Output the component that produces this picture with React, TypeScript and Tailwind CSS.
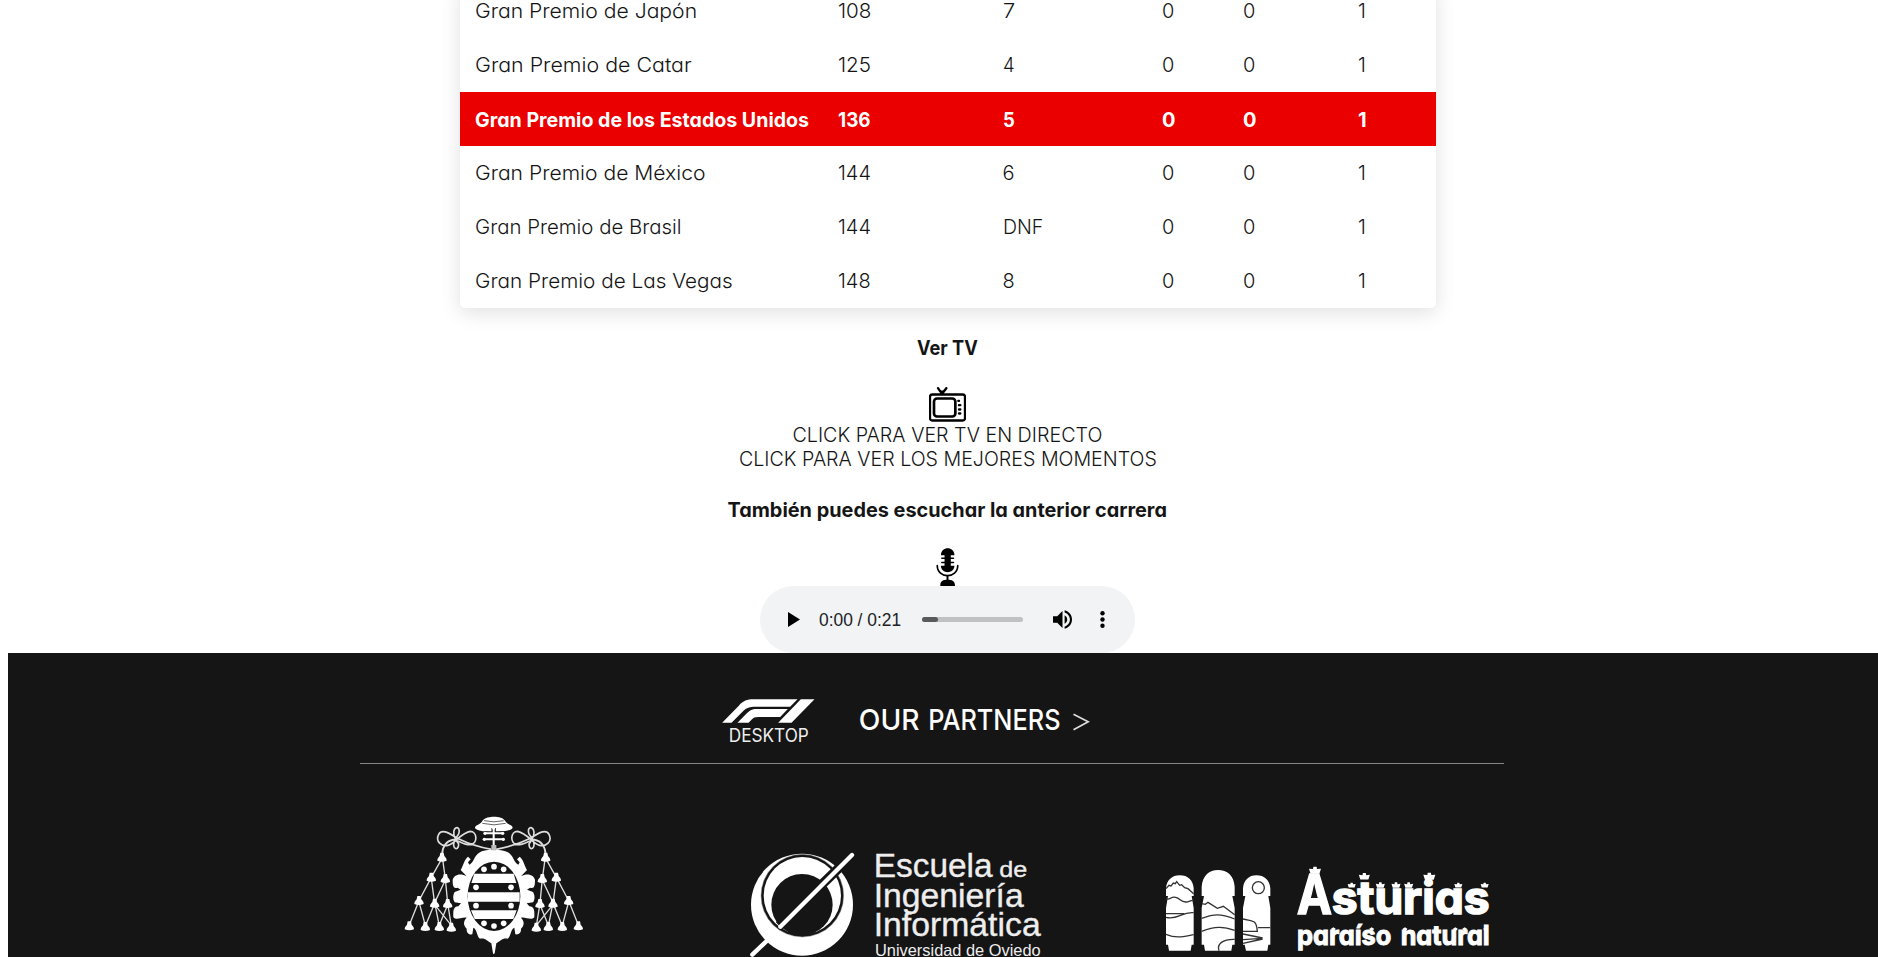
import { useLayoutEffect, useRef, useState } from "react";

type FitProps = { text: string; width: number; className?: string };

// Widens or narrows a line of text so that it spans the given measure.
function Fit({ text, width, className = "origin-left" }: FitProps) {
  const ref = useRef<HTMLSpanElement>(null);
  const [scale, setScale] = useState(1);
  useLayoutEffect(() => {
    if (ref.current) setScale(width / ref.current.offsetWidth);
  }, [text, width]);
  return (
    <span ref={ref} className={`inline-block whitespace-nowrap ${className}`} style={{ transform: `scaleX(${scale})` }}>
      {text}
    </span>
  );
}

const rows = [
  { race: "Gran Premio de Japón", w: 222, points: "108", pos: "7" },
  { race: "Gran Premio de Catar", w: 217, points: "125", pos: "4" },
  { race: "Gran Premio de los Estados Unidos", w: 334, points: "136", pos: "5", active: true },
  { race: "Gran Premio de México", w: 231, points: "144", pos: "6" },
  { race: "Gran Premio de Brasil", w: 207, points: "144", pos: "DNF" },
  { race: "Gran Premio de Las Vegas", w: 258, points: "148", pos: "8" },
];

function Standings() {
  return (
    <div className="ml-[460px] -mt-4 w-[976px] rounded-[5px] bg-white shadow-[0_5px_20px_rgba(0,0,0,0.12)]">
      {rows.map((r) => (
        <div
          key={r.race}
          className={`grid h-[54px] grid-cols-[364px_164px_160px_80px_115px_auto] items-center pl-[14px] leading-6 ${
            r.active ? "bg-[#eb0000] pt-0.5 font-bold text-white" : "font-light"
          }`}
        >
          <span className="pl-[0.5px]"><Fit text={r.race} width={r.w} /></span>
          <span><Fit text={r.points} width={33} /></span>
          <span className="pl-[0.5px]"><Fit text={r.pos} width={r.pos === "DNF" ? 40 : 12} /></span>
          <span>0</span>
          <span className="pl-px">0</span>
          <span className="pl-px">1</span>
        </div>
      ))}
    </div>
  );
}

function TvIcon() {
  return (
    <svg viewBox="0 0 111 104" className="block h-[35px] w-[37px]" fill="none" stroke="#000">
      <rect x="3" y="22" width="105" height="78" rx="7" strokeWidth="7" />
      <rect x="15" y="34" width="64" height="54" rx="9" strokeWidth="8" />
      <path d="M27 3l12 17L52 3" strokeWidth="7" strokeLinecap="round" />
      <path d="M31 10L47 10L43 21H36Z" fill="#000" stroke="none" />
      <path d="M88 41h2M90 54h4M90 67h4M90 79h4" strokeWidth="7" strokeLinecap="round" />
    </svg>
  );
}

function MicIcon() {
  return (
    <svg viewBox="0 0 68 115" className="block h-[38px] w-[23px]">
      <path d="M14 22C14-6 55-6 55 22Z" />
      <path d="M14 54H55C54 80 15 80 14 54Z" />
      <path d="M25 18H44V60H25Z" />
      <path d="M17 31H52M17 44H52" stroke="#000" strokeWidth="5" strokeLinecap="round" />
      <path d="M3 53C3 94 65 94 65 53" fill="none" stroke="#000" strokeWidth="5" strokeLinecap="round" />
      <path d="M31 83H37V98H31Z" />
      <path d="M12 115C12 99 20 96 34 96C48 96 56 99 57 115Z" />
    </svg>
  );
}

function Player() {
  return (
    <div className="flex h-[67px] w-[375px] shrink-0 items-center rounded-full bg-[#f1f3f4] font-['Liberation_Sans',sans-serif]">
      <svg viewBox="0 0 12 15" className="ml-7 h-[15px] w-3"><path d="M0 0L12 7.5L0 15Z" /></svg>
      <span className="ml-[19px] w-[83px] text-[#202124]"><Fit text="0:00 / 0:21" width={82} className="origin-left text-[18px] leading-6" /></span>
      <div className="ml-5 h-[5px] w-[101px] overflow-hidden rounded-full bg-[#c0c1c2]">
        <div className="h-full w-4 rounded-r-full bg-[#5a5a5b]" />
      </div>
      <svg viewBox="3 3 18 18" className="ml-[30px] h-[19px] w-[19px]">
        <path d="M3 9v6h4l5 5V4L7 9H3zm13.5 3A4.5 4.5 0 0 0 14 7.97v8.05c1.48-.73 2.5-2.25 2.5-4.02zM14 3.23v2.06c2.89.86 5 3.54 5 6.71s-2.11 5.85-5 6.71v2.06c4.01-.91 7-4.49 7-8.77s-2.99-7.86-7-8.77z" />
      </svg>
      <svg viewBox="0 0 5 17" className="ml-7 h-[17px] w-[5px]">
        <circle cx="2.5" cy="2.2" r="2.2" /><circle cx="2.5" cy="8.5" r="2.2" /><circle cx="2.5" cy="14.8" r="2.2" />
      </svg>
    </div>
  );
}

function F1Logo() {
  return (
    <svg viewBox="60 80 290 165" className="h-[55px] w-[97px]" fill="#fff">
      <path d="M66 157L116 106C130 91 140 87 160 87H292L270 109H166C148 109 140 112 130 121L94 157Z" />
      <path d="M112 157L137 132C148 121 154 116 170 116H263L240 140H174C164 140 160 142 154 148L145 157Z" />
      <path d="M302 87H343L274 157H234Z" />
      <text x="86" y="216" fontSize="55" fontWeight="400" fill="#eee" textLength="240" lengthAdjust="spacingAndGlyphs">DESKTOP</text>
    </svg>
  );
}

const tassels = [
  [156, 172], [124, 232], [166, 236], [87, 302], [134, 310], [173, 311],
  [58, 378], [106, 380], [148, 380], [184, 382],
];

function CrestSide() {
  return (
    <g>
      <path
        d="M305 148C270 142 230 128 205 116C180 102 156 84 146 103C135 125 155 140 174 136C195 132 210 100 240 94C262 94 264 130 242 134C222 136 205 120 190 119C165 124 157 140 156 165M196 117C178 78 216 72 206 102L196 117C180 144 206 158 206 132L196 117"
        fill="none" stroke="#ddd" strokeWidth="5"
      />
      <path
        d="M156 175L124 232L87 302L58 375M158 178L166 236L173 310L184 378M124 236L134 310L106 378M166 240L134 308L148 378M87 306L106 376M134 314L184 376M173 314L148 376"
        fill="none" stroke="#ddd" strokeWidth="4"
      />
      {tassels.map(([x, y]) => (
        <path key={`${x}-${y}`} d={`M${x - 5} ${y - 14}H${x + 5}L${x + 7} ${y - 4}C${x + 13} ${y + 2} ${x + 14} ${y + 6} ${x + 14} ${y + 10}Q${x} ${y + 16} ${x - 14} ${y + 10}C${x - 14} ${y + 6} ${x - 13} ${y + 2} ${x - 7} ${y - 4}Z`} />
      ))}
    </g>
  );
}

const frameHalf =
  "M312 149C290 149 270 152 262 163C252 172 251 188 238 194L234 187L242 178L234 170C222 179 221 195 212 210L230 229C210 218 190 225 188 241C188 257 190 268 203 263L212 269L194 276C188 285 188 299 194 307L213 310L205 319C188 320 190 335 190 352C201 363 214 350 230 353C218 365 221 377 230 386C229 397 235 405 247 403L250 383C262 388 260 410 270 416C286 413 292 423 304 430L309 460L312 463Z";

function CrestLogo() {
  return (
    <svg viewBox="0 0 630 471" className="block h-[157px] w-[210px] shrink-0" fill="#fff">
      <CrestSide />
      <g transform="translate(623 0) scale(-1 1)"><CrestSide /></g>
      <path d={frameHalf} />
      <path d={frameHalf} transform="translate(623 0) scale(-1 1)" />
      <ellipse cx="312" cy="289" rx="79" ry="104" fill="#151515" />
      <path d="M255 84C255 75 268 75 275 66C284 50 300 51 312 50C326 51 340 51 348 66C355 75 368 75 368 84C358 100 264 100 255 84Z" />
      <path d="M277 70Q312 79 347 70M282 62Q312 69 341 62" stroke="#151515" strokeWidth="2" fill="none" />
      <path d="M311 84V150M282 100H341M280 118H343" stroke="#151515" strokeWidth="13" />
      <path d="M311 84V150M285 100H338M283 118H340" stroke="#fff" strokeWidth="6" />
      {[[311, 84], [285, 100], [338, 100], [283, 118], [340, 118]].map(([x, y]) => <circle key={`${x}-${y}`} cx={x} cy={y} r="5" />)}
      <path d="M304 135H319V151H304Z" fill="#bbb" />
      <path d="M253 221H371L379 249H244Z" />
      <path d="M234 277H389V305H234Z" />
      <path d="M243 331H380L370 357H254Z" />
      {[[312, 200], [282, 208], [341, 208], [258, 262], [363, 262], [258, 317], [363, 317], [282, 370], [341, 370], [312, 378]].map(([x, y]) => (
        <circle key={`${x}-${y}`} cx={x} cy={y} r="8.5" />
      ))}
    </svg>
  );
}

function SchoolLogo() {
  return (
    <svg viewBox="0 0 930 351" className="block h-[117px] w-[310px] shrink-0" fill="#fff" fontFamily="Liberation Sans, sans-serif">
      <circle cx="186" cy="194" r="153" />
      <circle cx="187" cy="167" r="124" fill="#151515" />
      <circle cx="187" cy="167" r="124" fill="none" stroke="#999" strokeWidth="1.5" />
      <circle cx="187" cy="167" r="116" />
      <circle cx="186" cy="194" r="92" fill="#151515" />
      <path d="M118 257L306 75" stroke="#151515" strokeWidth="29" />
      <path d="M121 260L336 45M37 344L82 301" stroke="#fff" strokeWidth="13" strokeLinecap="round" />
      <g fill="#eee" stroke="#eee" strokeWidth="1">
        <text x="401" y="112" fontSize="97" textLength="357" lengthAdjust="spacingAndGlyphs">Escuela</text>
        <text x="778" y="112" fontSize="68" textLength="84" lengthAdjust="spacingAndGlyphs">de</text>
        <text x="401" y="200" fontSize="97" textLength="450" lengthAdjust="spacingAndGlyphs">Ingeniería</text>
        <text x="401" y="287" fontSize="97" textLength="501" lengthAdjust="spacingAndGlyphs">Informática</text>
        <text x="405" y="347" fontSize="47" strokeWidth="0" textLength="497" lengthAdjust="spacingAndGlyphs">Universidad de Oviedo</text>
      </g>
    </svg>
  );
}

const crowns = [[495, 62, 1.2], [605, 106, 0.8], [643, 80, 1.1], [691, 106, 0.9], [738, 106, 0.9], [776, 106, 0.9], [838, 80, 1.2], [925, 106, 0.8], [1004, 106, 0.8]];
const smallCrowns = [550, 665, 765, 858, 916, 944, 1007];

function AsturiasLogo() {
  return (
    <svg viewBox="0 0 1080 321" className="block h-[107px] w-[360px] shrink-0" fill="#fff">
      <path d="M48 138V115C50 90 66 76 89 76C114 76 129 90 131 115V138H125L131 174V284H125L122 302H57L54 284H48V174L54 138Z" />
      <path d="M155 138V110C158 76 178 60 204 60C231 60 252 76 254 110V138H247L254 174V284H247L244 302H165L162 284H155V174L162 138Z" />
      <path d="M279 138V115C281 90 297 76 319 76C343 76 359 90 361 115V138H355L361 174V284H355L352 302H288L284 284H279V174L286 138Z" />
      <g fill="none" stroke="#333" strokeWidth="4">
        <path d="M48 116L57 106L63 108L70 99L76 101L80 95L89 106L95 104L104 113L114 116L131 131M48 147C67 149 60 138 77 142C91 145 92 157 108 156C119 156 120 150 131 151M48 191H103M48 202C84 211 95 184 131 188M48 253C79 266 98 260 131 254" />
        <path d="M155 161L166 163L174 157L202 175L220 169L254 194M155 205C192 192 210 190 254 207M155 244C195 229 219 229 254 241M207 302C200 282 218 267 254 268" />
        <circle cx="325" cy="113" r="18" />
        <path d="M279 207C310 215 319 208 322 244H279M324 233H361M279 252L338 264M338 267L279 280M279 269L337 265" />
      </g>
      <g fontWeight="700">
        <text x="440" y="192" fontSize="163" stroke="#fff" strokeWidth="4" textLength="106" lengthAdjust="spacingAndGlyphs">A</text>
        <text x="545" y="192" fontSize="138" stroke="#fff" strokeWidth="5" textLength="474" lengthAdjust="spacingAndGlyphs">sturias</text>
        <text x="441" y="284" fontSize="81" stroke="#fff" strokeWidth="3" textLength="283" lengthAdjust="spacingAndGlyphs">paraíso</text>
        <text x="752" y="284" fontSize="81" stroke="#fff" strokeWidth="3" textLength="267" lengthAdjust="spacingAndGlyphs">natural</text>
      </g>
      {crowns.map(([x, y, s]) => (
        <path key={x} transform={`translate(${x} ${y}) scale(${s})`} d="M-15-5L-5-4L-4-10H4L5-4L15-5L11 8H-11Z" />
      ))}
      {smallCrowns.map((x) => <path key={x} d={`M${x - 7} 236L${x} 232L${x + 7} 236L${x + 5} 241H${x - 5}Z`} />)}
    </svg>
  );
}

export default function App() {
  return (
    <div className="h-[957px] w-[1878px] overflow-hidden bg-white font-['Inter','Open_Sans',sans-serif] text-[20px] leading-6 text-[#151515] [font-feature-settings:'cv11']">
      <Standings />
      <main className="ml-[728px] flex h-[345px] w-[439px] flex-col items-center whitespace-nowrap pt-7">
        <h4 className="font-bold"><Fit text="Ver TV" width={61} className="origin-center" /></h4>
        <div className="mt-[27px]"><TvIcon /></div>
        <a className="mt-px font-light"><Fit text="CLICK PARA VER TV EN DIRECTO" width={310} className="origin-center" /></a>
        <a className="font-light"><Fit text="CLICK PARA VER LOS MEJORES MOMENTOS" width={418} className="origin-center" /></a>
        <h4 className="mt-[27px] font-bold"><Fit text="También puedes escuchar la anterior carrera" width={439} className="origin-center" /></h4>
        <div className="mt-[26px]"><MicIcon /></div>
        <Player />
      </main>
      <footer className="ml-2 flex h-[304px] flex-col justify-between bg-[#151515]">
        <div className="ml-[352px] flex h-[111px] w-[1144px] shrink-0 items-start border-b border-[#858585] pl-[360px] pt-[44px]">
          <F1Logo />
          <svg viewBox="470 80 710 165" className="ml-[39px] h-[55px] w-[237px]" fill="#fff">
            <g fontSize="86" fontWeight="500">
              <text x="478" y="178" textLength="182" lengthAdjust="spacingAndGlyphs">OUR</text>
              <text x="686" y="178" textLength="397" lengthAdjust="spacingAndGlyphs">PARTNERS</text>
            </g>
            <path d="M1122 132L1166 154L1122 178" fill="none" stroke="#ddd" strokeWidth="5" />
          </svg>
        </div>
        <div className="flex items-end pl-[382px]">
          <CrestLogo />
          <div className="ml-[140px]"><SchoolLogo /></div>
          <div className="ml-[100px]"><AsturiasLogo /></div>
        </div>
      </footer>
    </div>
  );
}
